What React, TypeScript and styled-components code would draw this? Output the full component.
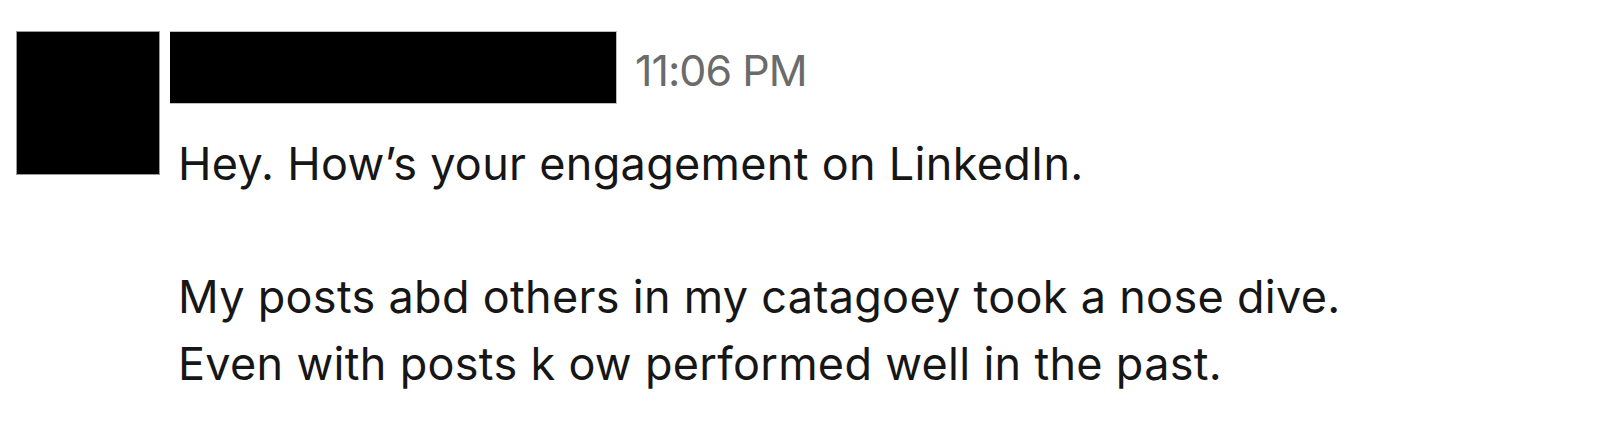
import React from 'react'
import styled, { createGlobalStyle } from 'styled-components'

//styling:
const GlobalStyle = createGlobalStyle`
  body {
    margin: 0;
    background: #ffffff;
    font-family: Inter, 'Liberation Sans', Arial, sans-serif;
  }
`
const MessageRow = styled.div`
  display: flex;
  align-items: flex-start;
  gap: 10px;
  padding: 31px 0 0 16px;
`
const Avatar = styled.div`
  width: 142px;
  height: 142px;
  background-color: #000;
  border: 1px solid #9a9a9a;
  flex-shrink: 0;
`
const Body = styled.div`
  display: flex;
  flex-direction: column;
`
const Header = styled.div`
  display: flex;
  align-items: flex-end;
  gap: 18px;
`
const NameBlock = styled.div`
  width: 446px;
  height: 71px;
  background-color: #000;
  border: 1px solid #bdbdbd;
  border-left: none;
`
const Time = styled.span`
  font-size: 43px;
  letter-spacing: -1px;
  color: #6b6b6b;
  margin-bottom: 8px;
`
const Text = styled.div`
  margin-top: 27px;
  padding-left: 8px;
  font-size: 45px;
  letter-spacing: 0.3px;
  line-height: 66.5px;
  color: #161616;
  white-space: pre-line;
`
/////////

const message = `Hey. How’s your engagement on LinkedIn.

My posts abd others in my catagoey took a nose dive.
Even with posts k ow performed well in the past.`

export default function App() {
  return (
    <>
      <GlobalStyle />
      <MessageRow>
        <Avatar />
        <Body>
          <Header>
            <NameBlock />
            <Time>11:06 PM</Time>
          </Header>
          <Text>{message}</Text>
        </Body>
      </MessageRow>
    </>
  )
}
